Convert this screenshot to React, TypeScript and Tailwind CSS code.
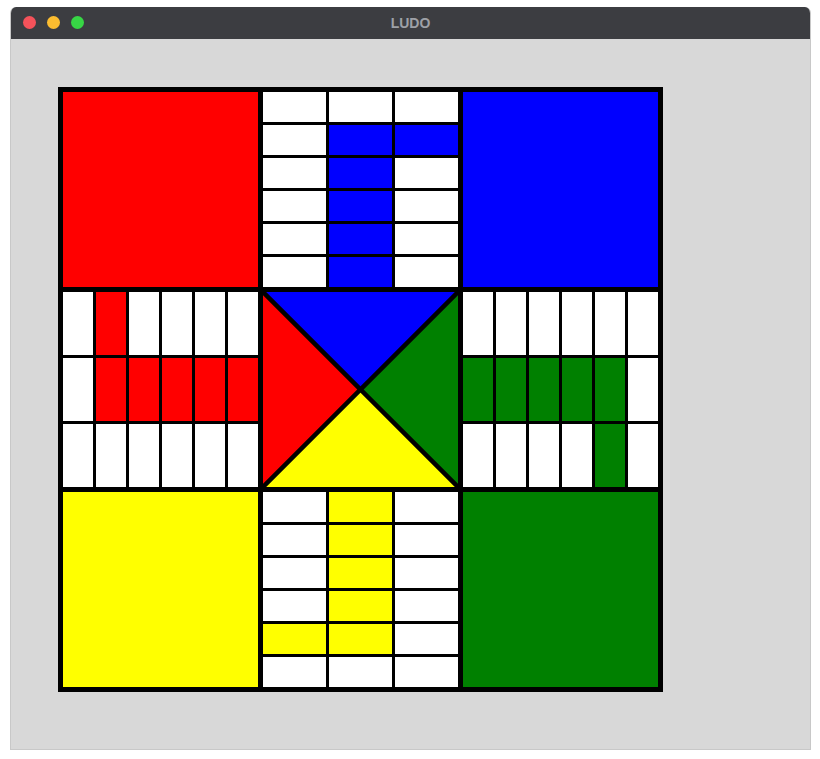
import React from "react";

const RED = "bg-[#ff0000]";
const BLUE = "bg-[#0000ff]";
const GREEN = "bg-[#008000]";
const YELLOW = "bg-[#ffff00]";

function VArm({ color, isColored }: { color: string; isColored: (r: number, c: number) => boolean }) {
  const cells = [];
  for (let r = 0; r < 6; r++) {
    for (let c = 0; c < 3; c++) {
      cells.push(<div key={`${r}-${c}`} className={isColored(r, c) ? color : "bg-white"} />);
    }
  }
  return <div className="grid grid-cols-3 grid-rows-6 gap-[3px] bg-black w-[195px] h-[195px]">{cells}</div>;
}

function HArm({ color, isColored }: { color: string; isColored: (r: number, c: number) => boolean }) {
  const cells = [];
  for (let r = 0; r < 3; r++) {
    for (let c = 0; c < 6; c++) {
      cells.push(<div key={`${r}-${c}`} className={isColored(r, c) ? color : "bg-white"} />);
    }
  }
  return <div className="grid grid-cols-6 grid-rows-3 gap-[3px] bg-black w-[195px] h-[195px]">{cells}</div>;
}

function Center() {
  return (
    <svg width="195" height="195" viewBox="0 0 195 195" className="block">
      <polygon points="0,0 195,0 97.5,97.5" fill="#0000ff" />
      <polygon points="0,0 0,195 97.5,97.5" fill="#ff0000" />
      <polygon points="195,0 195,195 97.5,97.5" fill="#008000" />
      <polygon points="0,195 195,195 97.5,97.5" fill="#ffff00" />
      <line x1="0" y1="0" x2="195" y2="195" stroke="#000" strokeWidth="4.5" />
      <line x1="195" y1="0" x2="0" y2="195" stroke="#000" strokeWidth="4.5" />
    </svg>
  );
}

export default function App() {
  return (
    <div className="w-[820px] h-[759px] bg-white pt-[7px] pl-[10px]" style={{ fontFamily: "'Liberation Sans', Arial, sans-serif" }}>
      <div className="w-[801px] h-[743px] flex flex-col rounded-t-[6px] overflow-hidden border-x border-b border-[#c8c8c8]">
        <div className="h-[32px] bg-[#3c3d41] relative flex items-center justify-center shrink-0">
          <div className="absolute left-[12px] top-[9px] flex gap-[11px]">
            <span className="w-[13px] h-[13px] rounded-full bg-[#f4525a]" />
            <span className="w-[13px] h-[13px] rounded-full bg-[#fcbd30]" />
            <span className="w-[13px] h-[13px] rounded-full bg-[#37d645]" />
          </div>
          <span className="text-[14px] font-bold text-[#9ea1a7]">LUDO</span>
        </div>
        <div className="flex-1 bg-[#d8d8d8] pl-[47px] pt-[48px]">
          <div className="w-[605px] h-[605px] bg-black p-[5px] grid grid-cols-[195px_195px_195px] grid-rows-[195px_195px_195px] gap-[5px]">
            <div className={RED} />
            <VArm color={BLUE} isColored={(r, c) => (c === 1 && r >= 1) || (r === 1 && c === 2)} />
            <div className={BLUE} />
            <HArm color={RED} isColored={(r, c) => (r === 1 && c >= 1) || (r === 0 && c === 1)} />
            <Center />
            <HArm color={GREEN} isColored={(r, c) => (r === 1 && c <= 4) || (r === 2 && c === 4)} />
            <div className={YELLOW} />
            <VArm color={YELLOW} isColored={(r, c) => (c === 1 && r <= 4) || (r === 4 && c === 0)} />
            <div className={GREEN} />
          </div>
        </div>
      </div>
    </div>
  );
}
